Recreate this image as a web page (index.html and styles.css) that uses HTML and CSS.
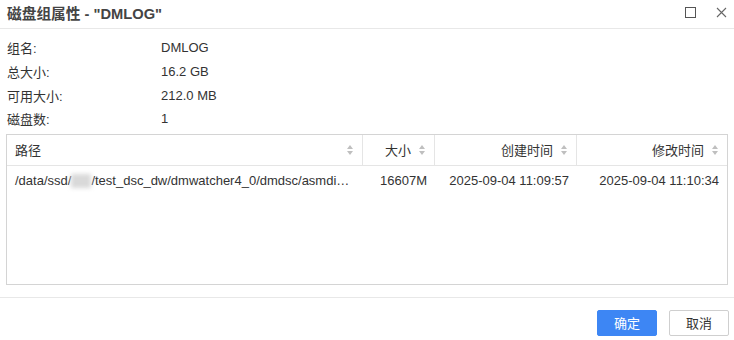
FILE: index.html
```html
<!DOCTYPE html>
<html>
<head>
<meta charset="utf-8">
<link rel="stylesheet" href="styles.css">
</head>
<body>
<div class="dialog">
  <div class="header">
    <div class="title">磁盘组属性 - "DMLOG"</div>
    <div class="tools">
      <svg width="11" height="11" viewBox="0 0 11 11"><rect x="0.5" y="0.5" width="10" height="10" fill="none" stroke="#555" stroke-width="1"/></svg>
      <svg width="11" height="11" viewBox="0 0 11 11"><path d="M1 1L10 10M10 1L1 10" stroke="#666" stroke-width="1.1"/></svg>
    </div>
  </div>
  <div class="info">
    <div class="row"><span class="lbl">组名:</span><span class="val">DMLOG</span></div>
    <div class="row"><span class="lbl">总大小:</span><span class="val">16.2 GB</span></div>
    <div class="row"><span class="lbl">可用大小:</span><span class="val">212.0 MB</span></div>
    <div class="row"><span class="lbl">磁盘数:</span><span class="val">1</span></div>
  </div>
  <div class="table">
    <div class="thead">
      <div class="th c1"><span>路径</span><i class="sort"></i></div>
      <div class="th c2 r"><span>大小</span><i class="sort"></i></div>
      <div class="th c3 r"><span>创建时间</span><i class="sort"></i></div>
      <div class="th c4 r"><span>修改时间</span><i class="sort"></i></div>
    </div>
    <div class="tr">
      <div class="td c1">/data/ssd/<span class="blur"></span>/test_dsc_dw/dmwatcher4_0/dmdsc/asmdi…</div>
      <div class="td c2 r">16607M</div>
      <div class="td c3 r">2025-09-04 11:09:57</div>
      <div class="td c4 r">2025-09-04 11:10:34</div>
    </div>
  </div>
  <div class="footer">
    <button class="btn primary">确定</button>
    <button class="btn">取消</button>
  </div>
</div>
</body>
</html>
```
FILE: styles.css
```css
* { box-sizing: border-box; }
html, body { margin: 0; padding: 0; background: #fff; }
body {
  font-family: "Liberation Sans", "Noto Sans CJK SC", sans-serif;
  font-size: 13px;
  color: #333;
  width: 734px;
  height: 340px;
  overflow: hidden;
}
.dialog { display: flex; flex-direction: column; height: 340px; }
.header {
  height: 29px;
  border-bottom: 1px solid #e8e8e8;
  display: flex;
  align-items: center;
  justify-content: space-between;
  padding: 0 7px 0 7px;
}
.title { font-size: 14.7px; font-weight: bold; color: #444; margin-top: -4px; }
.tools { display: flex; gap: 20px; align-items: center; margin-top: -4px; }
.info { padding: 7px 0 0 7px; }
.row { height: 23.7px; display: flex; align-items: center; }
.lbl { width: 154px; color: #333; }
.val { color: #333; }
.table {
  margin: 3px 6px 0 6px;
  border: 1px solid #d4d4d4;
  height: 151px;
}
.thead { display: flex; height: 31px; border-bottom: 1px solid #e5e5e5; }
.th {
  display: flex;
  align-items: center;
  padding: 0 8px 0 8px;
  border-right: 1px solid #e5e5e5;
  color: #333;
}
.th.c4 { border-right: none; }
.th span { flex: 1; }
.th.r span { text-align: right; padding-right: 8px; }
.c1 { width: 356px; }
.c2 { width: 72px; }
.c3 { width: 142px; }
.c4 { flex: 1; }
.sort {
  display: inline-block;
  width: 7px;
  height: 10px;
  position: relative;
}
.sort::before, .sort::after {
  content: "";
  position: absolute;
  left: 0;
  border-left: 3.5px solid transparent;
  border-right: 3.5px solid transparent;
}
.sort::before { top: 0; border-bottom: 4px solid #bfbfbf; }
.sort::after { bottom: 0; border-top: 4px solid #bfbfbf; }
.tr { display: flex; height: 30px; align-items: center; }
.td { padding: 0 8px; color: #333; white-space: nowrap; }
.td.r { text-align: right; }
.blur {
  display: inline-block;
  width: 20px;
  height: 14px;
  vertical-align: -3px;
  background: #d9d9d9;
  filter: blur(2px);
}
.footer {
  margin-top: 12px;
  border-top: 1px solid #e8e8e8;
  display: flex;
  justify-content: flex-end;
  gap: 12px;
  padding: 12px 5px 0 0;
}
.btn {
  font-family: "Liberation Sans", "Noto Sans CJK SC", sans-serif;
  font-size: 13px;
  height: 26px;
  width: 60px;
  border: 1px solid #cfcfcf;
  background: #fff;
  color: #333;
  border-radius: 2px;
  padding: 0;
}
.btn.primary { background: #3d86f4; border-color: #3d86f4; color: #fff; }
```
